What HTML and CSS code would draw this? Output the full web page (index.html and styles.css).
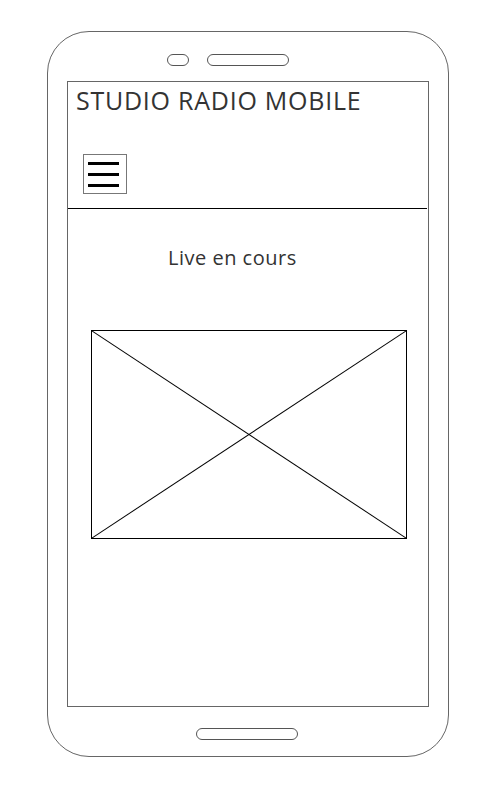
FILE: index.html
```html
<!DOCTYPE html>
<html>
<head>
    <title>Studio Radio Mobile</title>
    <link rel="stylesheet" href="styles.css">
</head>
<body>
    <div class="phone">
        <div class="speaker">
            <span class="pill small"></span>
            <span class="pill large"></span>
        </div>
        <div class="screen">
            <div class="header">
                <h1 class="title">STUDIO RADIO MOBILE</h1>
                <div class="burger">
                    <span></span>
                    <span></span>
                    <span></span>
                </div>
            </div>
            <p class="live">Live en cours</p>
            <div class="placeholder">
                <svg width="100%" height="100%" viewBox="0 0 314 206" preserveAspectRatio="none">
                    <line x1="0" y1="0" x2="314" y2="206" stroke="#000" stroke-width="1"/>
                    <line x1="314" y1="0" x2="0" y2="206" stroke="#000" stroke-width="1"/>
                </svg>
            </div>
        </div>
        <div class="home">
            <span class="pill home-btn"></span>
        </div>
    </div>
</body>
</html>
```

FILE: styles.css
```css
body { margin: 0; background: #fff; font-family: "Open Sans", "Noto Sans", sans-serif; color: #333; }
.phone {
    box-sizing: border-box;
    width: 402px;
    height: 726px;
    margin: 31px 0 0 47px;
    border: 1px solid #666;
    border-radius: 42px;
    padding-top: 22px;
}
.speaker { display: flex; margin-left: 119px; gap: 18px; height: 27px; }
.pill {
    box-sizing: border-box;
    display: block;
    height: 12px;
    border: 1px solid #555;
    border-radius: 6px;
}
.small { width: 22px; }
.large { width: 82px; }
.screen {
    box-sizing: border-box;
    width: 362px;
    height: 626px;
    margin-left: 19px;
    border: 1px solid #666;
}
.header {
    height: 126px;
    border-bottom: 1px solid #000;
    margin-right: 1px;
}
.title {
    margin: 0;
    padding: 2px 0 0 8px;
    font-size: 25px;
    font-weight: 400;
    line-height: 32px;
    letter-spacing: 0.75px;
}
.burger {
    box-sizing: border-box;
    width: 44px;
    height: 40px;
    margin: 38px 0 0 15px;
    border: 1px solid #777;
    padding: 7px 0 0 4px;
}
.burger span {
    display: block;
    width: 31px;
    height: 3px;
    background: #000;
    margin-bottom: 8px;
}
.live {
    margin: 36px 0 0 100px;
    font-size: 20px;
    line-height: 26px;
    letter-spacing: 0.5px;
}
.placeholder {
    box-sizing: border-box;
    width: 316px;
    height: 209px;
    margin: 59px 0 0 23px;
    border: 1px solid #000;
}
.placeholder svg { display: block; }
.home { padding-top: 21px; display: flex; justify-content: center; }
.home-btn { width: 102px; margin-left: -2px; }
```
